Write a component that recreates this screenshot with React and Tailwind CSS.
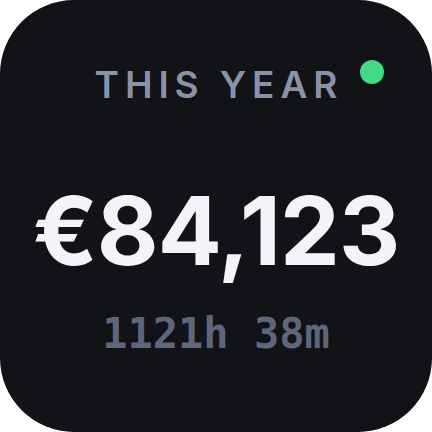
import React from 'react';

export default function App() {
  return (
    <div className="w-[432px] h-[432px] bg-white">
      <div className="relative w-full h-full rounded-[74px] bg-[#111317] flex flex-col items-center font-['Inter',sans-serif]">
        <div className="absolute top-[60px] right-[48px] w-6 h-6 rounded-full bg-[#3fdb86]"></div>

        <div className="mt-[66px] text-[37px] leading-none font-semibold tracking-[0.16em] text-[#8a92a6] pl-[0.16em]">
          THIS YEAR
        </div>

        <div className="mt-[80px] text-[95px] leading-none font-bold text-[#f3f4f8] tracking-[-0.01em]">
          €84,123
        </div>

        <div className="mt-[35px] text-[42px] leading-none font-bold text-[#5e6679] font-['DejaVu_Sans_Mono',monospace]">
          1121h 38m
        </div>
      </div>
    </div>
  );
}
